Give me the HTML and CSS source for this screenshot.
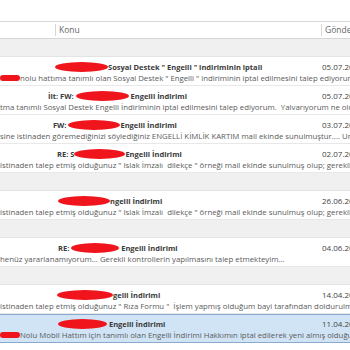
FILE: index.html
```
<!doctype html>
<html lang="tr">
<head>
	<meta charset="UTF-8">
	<title>Gelen Kutusu</title>
	<link rel="stylesheet" href="styles.css">
</head>
<body>
	<div class="list">
		<div class="top"></div>
		<div class="head">
			<div class="hcell first"></div>
			<div class="hcell subjcol"><span>Konu</span></div>
			<div class="hcell datecol"><span>Gönderilme</span></div>
		</div>

		<div class="group"></div>
		<div class="row">
			<div class="subj p55"><span class="blot w53"></span>Sosyal Destek " Engelli " indiriminin iptali</div>
			<div class="date">05.07.2019</div>
			<div class="prev"><span class="blot thin w20"></span>nolu hattıma tanımlı olan Sosyal Destek " Engelli " indiriminin iptal edilmesini talep ediyorum.</div>
		</div>
		<div class="row">
			<div class="subj p48">İlt: FW: <span class="blot w53"></span> Engelli İndirimi</div>
			<div class="date">05.07.2019</div>
			<div class="prev">tma tanımlı Sosyal Destek Engelli İndiriminin iptal edilmesini talep ediyorum.&nbsp; Yalvarıyorum ne olur</div>
		</div>
		<div class="row">
			<div class="subj p53">FW: <span class="blot w52"></span>Engelli İndirimi</div>
			<div class="date">03.07.2019</div>
			<div class="prev">sine istinaden göremediğinizi söylediğiniz ENGELLİ KİMLİK KARTIM mail ekinde sunulmuştur.... Umarım</div>
		</div>
		<div class="row">
			<div class="subj p57">RE: S<span class="blot w51"></span>Engelli İndirimi</div>
			<div class="date">02.07.2019</div>
			<div class="prev">istinaden talep etmiş olduğunuz " Islak İmzalı&nbsp; dilekçe " örneği mail ekinde sunulmuş olup; gerekli</div>
		</div>

		<div class="group"></div>
		<div class="row">
			<div class="subj p58"><span class="blot w52"></span>ngelli İndirimi</div>
			<div class="date">26.06.2019</div>
			<div class="prev">istinaden talep etmiş olduğunuz " Islak İmzalı&nbsp; dilekçe " örneği mail ekinde sunulmuş olup; gerekli</div>
		</div>

		<div class="group"></div>
		<div class="row">
			<div class="subj p58">RE: <span class="blot w48"></span> Engelli İndirimi</div>
			<div class="date">04.06.2019</div>
			<div class="prev">henüz yararlanamıyorum... Gerekli kontrollerin yapılmasını talep etmekteyim...</div>
		</div>

		<div class="group"></div>
		<div class="row">
			<div class="subj p57"><span class="blot w56"></span>gelli İndirimi</div>
			<div class="date">14.04.2019</div>
			<div class="prev">istinaden talep etmiş olduğunuz " Rıza Formu "&nbsp; İşlem yapmış olduğum bayi tarafından doldurulmuş</div>
		</div>
		<div class="row selected">
			<div class="subj p58"><span class="blot w49"></span> Engelli İndirimi</div>
			<div class="date">11.04.2019</div>
			<div class="prev"><span class="blot thin w20"></span>Nolu Mobil Hattım için tanımlı olan Engelli İndirimi Hakkımın iptal edilerek yeni almış olduğum</div>
		</div>
	</div>
</body>
</html>
```
FILE: styles.css
```
html,body{ margin: 0; padding: 0; background: #fff;}
body{ width: 350px; height: 350px; overflow: hidden; font-family: "Open Sans", "Noto Sans", sans-serif; font-size: 7.8px; color: #444;}
.list{ width: 350px;}
.top{ height: 21px;}

.head{ display: flex; height: 16px; border-top: 1px solid #d6d6d6; border-bottom: 1px solid #d6d6d6; color: #666; white-space: nowrap; font-size: 8.5px;}
.hcell{ display: flex; align-items: center; flex: none;}
.hcell span{ border-left: 1px solid #d6d6d6; padding-left: 3px; line-height: 12px;}
.first{ width: 55px;}
.subjcol{ width: 266px;}
.datecol{ flex: 1 0 auto;}

.group{ height: 17px; background: #f0f0f0; border-bottom: 1px solid #e4e4e4;}

.row{ display: grid; grid-template-columns: 322px 1fr; border-bottom: 1px solid #e8e8e8; white-space: nowrap; line-height: 9px; padding-top: 5px; box-sizing: border-box; height: 29px;}
.row.selected{ background: #d0e4f6; border-top: 1px solid #8aa9cf; border-bottom: 1px solid #8aa9cf; padding-top: 4px;}
.subj{ font-weight: bold; font-size: 7.5px; color: #3a3a3a;}
.date{ color: #444; font-size: 8px;}
.prev{ grid-column: 1 / 3; color: #5a5a5a; overflow: hidden;}

.p48{ padding-left: 48px;}
.p53{ padding-left: 53px;}
.p55{ padding-left: 55px;}
.p57{ padding-left: 57px;}
.p58{ padding-left: 58px;}

/* redacted names */
.blot{ display: inline-block; height: 10px; vertical-align: -2px; background: #f0141c; border-radius: 50% / 50%;}
.blot.thin{ height: 6px; vertical-align: 0; border-radius: 3px;}
.w20{ width: 20px;}
.w48{ width: 48px;}
.w49{ width: 49px;}
.w51{ width: 51px;}
.w52{ width: 52px;}
.w53{ width: 53px;}
.w56{ width: 56px;}
```
